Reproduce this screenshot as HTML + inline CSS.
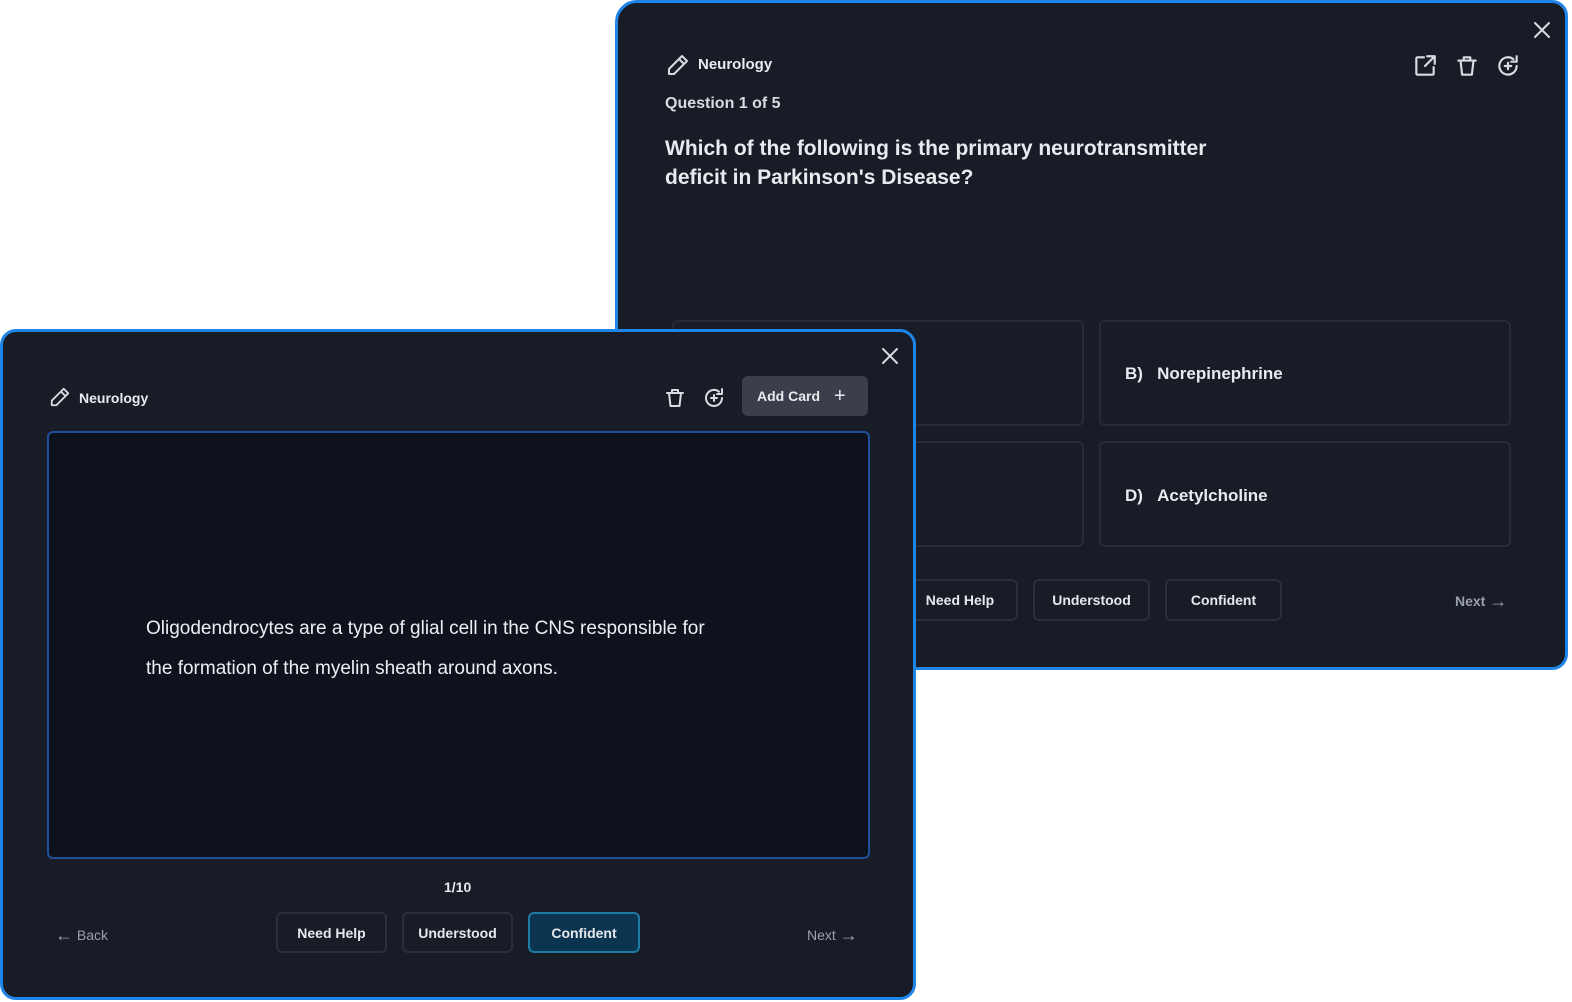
<!DOCTYPE html>
<html><head><meta charset="utf-8"><style>
*{box-sizing:border-box;margin:0;padding:0}
body{width:1572px;height:1002px;background:#fff;position:relative;overflow:hidden;font-family:"Liberation Sans",sans-serif;color:#e8eaee}
.panel{position:absolute;background:#181c26;border:3px solid #1f86e8;border-radius:16px}
.abs{position:absolute}
.box{position:absolute;border:2px solid #262b36;border-radius:6px}
.btn{position:absolute;border:2px solid #2a2f3a;border-radius:6px;font-size:14px;display:flex;align-items:center;justify-content:center;font-weight:bold;color:#e6e8ec;background:#181c26}
.ico{position:absolute;fill:none;stroke:#d8dbe0;stroke-width:2;stroke-linecap:round;stroke-linejoin:round}
.arr{font-size:18px;vertical-align:-1px}
</style></head><body>

<div class="panel" style="left:615px;top:0;width:953px;height:670px;border-top-left-radius:22px">
 <svg class="ico" style="left:48px;top:50px" width="24" height="24" viewBox="0 0 24 24"><path d="M16 3l5 5L8 21H3v-5z"/><path d="M13 6l5 5"/></svg>
 <div class="abs" style="left:80px;top:53px;font-size:15px;font-weight:bold">Neurology</div>
 <div class="abs" style="left:47px;top:92px;font-size:16px;font-weight:bold;color:#d8dbe0">Question 1 of 5</div>
 <div class="abs" style="left:47px;top:131px;font-size:21px;font-weight:bold;line-height:29px;width:600px">Which of the following is the primary neurotransmitter deficit in Parkinson's Disease?</div>
 <svg class="ico" style="left:794px;top:50px" width="26" height="26" viewBox="0 0 24 24"><path d="M11 4H5a1 1 0 0 0-1 1v14a1 1 0 0 0 1 1h14a1 1 0 0 0 1-1v-6"/><path d="M14 3h7v7M21 3l-9 9"/></svg>
 <svg class="ico" style="left:836px;top:50px" width="26" height="26" viewBox="0 0 24 24"><path d="M4 7h16M9 7V4h6v3M6 7l1.5 13h9L18 7"/></svg>
 <svg class="ico" style="left:877px;top:50px" width="26" height="26" viewBox="0 0 24 24"><path d="M20 12a8 8 0 1 1-3-6.3M20 3v5h-5"/><path d="M12 9v6M9 12h6"/></svg>
 <svg class="ico" style="left:914px;top:17px" width="20" height="20" viewBox="0 0 20 20"><path d="M3 3l14 14M17 3L3 17"/></svg>
 <div class="box" style="left:54px;top:317px;width:412px;height:106px"></div>
 <div class="box" style="left:481px;top:317px;width:412px;height:106px"></div>
 <div class="box" style="left:54px;top:438px;width:412px;height:106px"></div>
 <div class="box" style="left:481px;top:438px;width:412px;height:106px"></div>
 <div class="abs" style="left:507px;top:361px;font-size:17px;font-weight:bold">B)&nbsp;&nbsp;&nbsp;Norepinephrine</div>
 <div class="abs" style="left:507px;top:483px;font-size:17px;font-weight:bold">D)&nbsp;&nbsp;&nbsp;Acetylcholine</div>
 <div class="btn" style="left:284px;top:576px;width:116px;height:42px">Need Help</div>
 <div class="btn" style="left:415px;top:576px;width:117px;height:42px">Understood</div>
 <div class="btn" style="left:547px;top:576px;width:117px;height:42px">Confident</div>
 <div class="abs" style="left:837px;top:588px;font-size:14px;color:#9aa0aa;font-weight:bold">Next <span class="arr">&rarr;</span></div>
</div>

<div class="panel" style="left:0;top:329px;width:916px;height:671px">
 <svg class="ico" style="left:46px;top:54px" width="22" height="22" viewBox="0 0 24 24"><path d="M16 3l5 5L8 21H3v-5z"/><path d="M13 6l5 5"/></svg>
 <div class="abs" style="left:76px;top:58px;font-size:14px;font-weight:bold">Neurology</div>
 <svg class="ico" style="left:660px;top:54px" width="24" height="24" viewBox="0 0 24 24"><path d="M4 7h16M9 7V4h6v3M6 7l1.5 13h9L18 7"/></svg>
 <svg class="ico" style="left:699px;top:54px" width="24" height="24" viewBox="0 0 24 24"><path d="M20 12a8 8 0 1 1-3-6.3M20 3v5h-5"/><path d="M12 9v6M9 12h6"/></svg>
 <div class="abs" style="left:739px;top:44px;width:126px;height:40px;background:#3a3f4b;border-radius:6px;font-size:14px;font-weight:bold;display:flex;align-items:center;padding-left:15px">Add Card<span style="margin-left:14px;font-size:20px;font-weight:normal">+</span></div>
 <svg class="ico" style="left:877px;top:14px" width="20" height="20" viewBox="0 0 20 20"><path d="M3 3l14 14M17 3L3 17"/></svg>
 <div class="abs" style="left:44px;top:99px;width:823px;height:428px;background:#0e121d;border:2px solid #1d4f9c;border-radius:6px"></div>
 <div class="abs" style="left:143px;top:277px;font-size:19px;line-height:40px;width:578px;color:#eceef2">Oligodendrocytes are a type of glial cell in the CNS responsible for the formation of the myelin sheath around axons.</div>
 <div class="abs" style="left:441px;top:547px;font-size:14px;font-weight:bold">1/10</div>
 <div class="abs" style="left:52px;top:593px;font-size:14px;color:#9aa0aa"><span class="arr">&larr;</span> Back</div>
 <div class="btn" style="left:273px;top:580px;width:111px;height:41px">Need Help</div>
 <div class="btn" style="left:399px;top:580px;width:111px;height:41px">Understood</div>
 <div class="btn" style="left:525px;top:580px;width:112px;height:41px;background:#0b3450;border-color:#1f7aa6">Confident</div>
 <div class="abs" style="left:804px;top:593px;font-size:14px;color:#9aa0aa">Next <span class="arr">&rarr;</span></div>
</div>
</body></html>
